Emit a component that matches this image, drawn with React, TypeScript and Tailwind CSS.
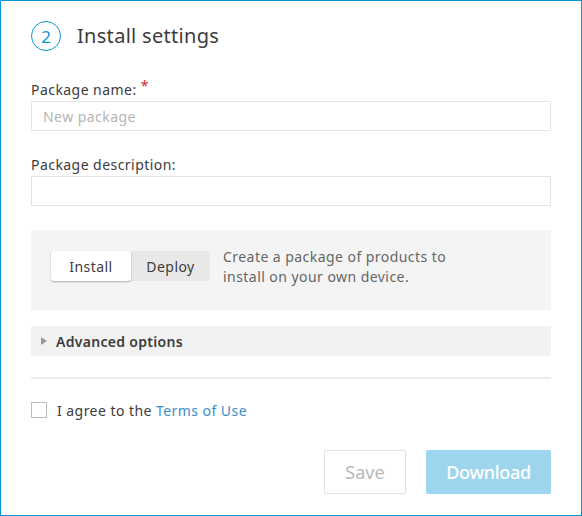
import React from "react";

export default function App() {
  return (
    <div
      className="w-[582px] h-[516px] border border-[#0696d7] bg-white px-[30px] pt-[20px] text-[#3c3c3c] tracking-[0.45px]"
      style={{ fontFamily: "'Noto Sans', Roboto, sans-serif" }}
    >
      <div className="flex items-center h-[30px]">
        <div className="w-[30px] h-[30px] rounded-full border border-[#0696d7] flex items-center justify-center text-[#0696d7] text-[17px] leading-none tracking-normal">
          2
        </div>
        <div className="ml-[16px] text-[20px] leading-none text-[#3c3c3c] tracking-[0.3px]">Install settings</div>
      </div>

      <div className="mt-[29px] text-[14px] leading-[20px] text-[#3c3c3c]">
        Package name: <span className="text-[#dd2222] relative -top-[4px]">*</span>
      </div>
      <div className="mt-[1px] h-[30px] border border-[#e3e3e3] flex items-center px-[11px] text-[14px] text-[#b5b5b5]">
        New package
      </div>

      <div className="mt-[24px] text-[14px] leading-[20px] text-[#3c3c3c]">Package description:</div>
      <div className="mt-[1px] h-[30px] border border-[#e3e3e3]"></div>

      <div className="mt-[24px] h-[80px] bg-[#f4f4f4] flex items-start pl-[20px] pt-[21px]">
        <div className="flex h-[30px] rounded-[3px] bg-[#e8e8e8] text-[14px]">
          <div className="w-[80px] h-[30px] bg-white rounded-[3px] shadow-[0_1px_2px_rgba(0,0,0,0.3)] flex items-center justify-center text-[#3c3c3c]">
            Install
          </div>
          <div className="w-[79px] h-[30px] flex items-center justify-center text-[#3c3c3c]">Deploy</div>
        </div>
        <div className="ml-[13px] -mt-[4px] text-[14px] leading-[20px] text-[#666666]">
          Create a package of products to
          <br />
          install on your own device.
        </div>
      </div>

      <div className="mt-[16px] h-[30px] bg-[#f2f2f2] flex items-center pl-[10px]">
        <svg width="6" height="8" viewBox="0 0 6 8" className="mr-[9px]">
          <path d="M0 0 L6 4 L0 8 Z" fill="#9a9a9a" />
        </svg>
        <span className="text-[14px] font-semibold text-[#3c3c3c] tracking-[0.3px]">Advanced options</span>
      </div>

      <div className="mt-[21px] h-[2px] bg-[#e9edf0]"></div>

      <div className="mt-[23px] flex items-center h-[16px]">
        <div className="w-[16px] h-[16px] border border-[#bdbdbd] bg-white"></div>
        <span className="ml-[10px] text-[14px] text-[#3c3c3c]">
          I agree to the <span className="text-[#3a8dcc]">Terms of Use</span>
        </span>
      </div>

      <div className="mt-[32px] flex justify-end gap-[20px] tracking-normal">
        <div className="w-[82px] h-[44px] border border-[#e0e0e0] rounded-[2px] flex items-center justify-center text-[18px] text-[#b8b8b8]">
          Save
        </div>
        <div className="w-[125px] h-[44px] rounded-[2px] bg-[#9dd5ef] flex items-center justify-center text-[18px] font-medium text-white tracking-[-0.3px]">
          Download
        </div>
      </div>
    </div>
  );
}
